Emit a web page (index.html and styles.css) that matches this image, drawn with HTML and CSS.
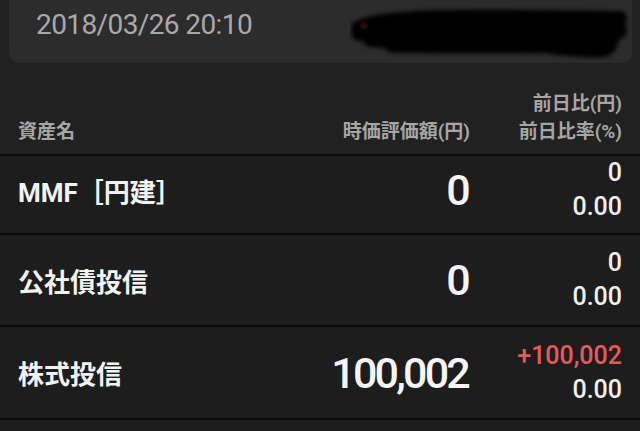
FILE: index.html
```html
<!DOCTYPE html>
<html lang="ja">
<head>
<meta charset="utf-8">
<link rel="stylesheet" href="styles.css">
</head>
<body>
<div class="card">
  <span class="date">2018/03/26 20:10</span>
  <svg class="redact" width="282" height="56" viewBox="0 0 282 56">
    <defs>
      <filter id="b" x="-10%" y="-30%" width="120%" height="160%">
        <feGaussianBlur stdDeviation="2.2"/>
      </filter>
    </defs>
    <g filter="url(#b)" fill="#050505" stroke="#050505" stroke-linecap="round">
      <path d="M8 24 C 30 10, 120 12, 270 14" stroke-width="14" fill="none"/>
      <path d="M10 28 C 60 26, 160 24, 268 26" stroke-width="18" fill="none"/>
      <path d="M20 36 C 80 40, 180 38, 262 36" stroke-width="14" fill="none"/>
      <path d="M40 44 C 120 46, 200 44, 262 44" stroke-width="9" fill="none"/>
      <path d="M200 47 C 230 50, 250 52, 258 49" stroke-width="6" fill="none"/>
    </g>
    <circle cx="14" cy="22" r="3" fill="#4a1212" filter="url(#b)"/>
  </svg>
</div>

<div class="head">
  <div class="h-name">資産名</div>
  <div class="h-val">時価評価額(円)</div>
  <div class="h-chg"><span>前日比(円)</span><span>前日比率(%)</span></div>
</div>

<div class="row r1">
  <div class="name">MMF［円建］</div>
  <div class="val">0</div>
  <div class="chg"><span>0</span><span>0.00</span></div>
</div>
<div class="row r2">
  <div class="name">公社債投信</div>
  <div class="val">0</div>
  <div class="chg"><span>0</span><span>0.00</span></div>
</div>
<div class="row r3">
  <div class="name">株式投信</div>
  <div class="val">100,002</div>
  <div class="chg"><span class="up">+100,002</span><span>0.00</span></div>
</div>
<div class="rest"></div>
</body>
</html>
```

FILE: styles.css
```css
html, body {
  margin: 0;
  padding: 0;
  background: #212121;
  width: 640px;
  height: 431px;
  overflow: hidden;
  font-family: Roboto, "Noto Sans CJK JP", sans-serif;
}

.card {
  margin: 0 8px 0 9px;
  height: 63px;
  background: #2c2c2c;
  border-radius: 0 0 10px 10px;
  display: flex;
  align-items: flex-start;
}

.date {
  margin: 11px 0 0 27px;
  font-size: 28px;
  line-height: 28px;
  color: #a9a9a9;
  letter-spacing: -0.6px;
}

.redact {
  margin: 4px 0 0 auto;
  display: block;
}

.head {
  height: 91px;
  box-sizing: border-box;
  display: grid;
  grid-template-columns: 1fr auto 152px;
  align-items: end;
  padding: 0 18px 8px 18px;
  color: #a6a6a6;
  font-weight: 700;
  font-size: 19px;
  line-height: 28px;
}

.h-val { text-align: right; }

.h-chg {
  display: flex;
  flex-direction: column;
  align-items: flex-end;
}

.row {
  border-top: 2px solid #0b0b0b;
  background: #1d1d1d;
  display: grid;
  grid-template-columns: 1fr auto 152px;
  align-items: center;
  padding: 0 18px;
  box-sizing: border-box;
}

.r1 { height: 79px; padding-bottom: 14px; }
.r2 { height: 92px; }
.r3 { height: 93px; }

.rest {
  border-top: 2px solid #0b0b0b;
  background: #1d1d1d;
  height: 20px;
}

.name {
  color: #f2f2f2;
  font-weight: 700;
  font-size: 26px;
}

.val {
  color: #f5f5f5;
  font-size: 43px;
  font-weight: 500;
  text-align: right;
  letter-spacing: -2.8px;
  margin-right: 2px;
}

.chg {
  display: flex;
  flex-direction: column;
  align-items: flex-end;
  color: #f0f0f0;
  font-size: 25px;
  font-weight: 500;
  line-height: 34px;
}

.up { color: #e85a5a; }
```
